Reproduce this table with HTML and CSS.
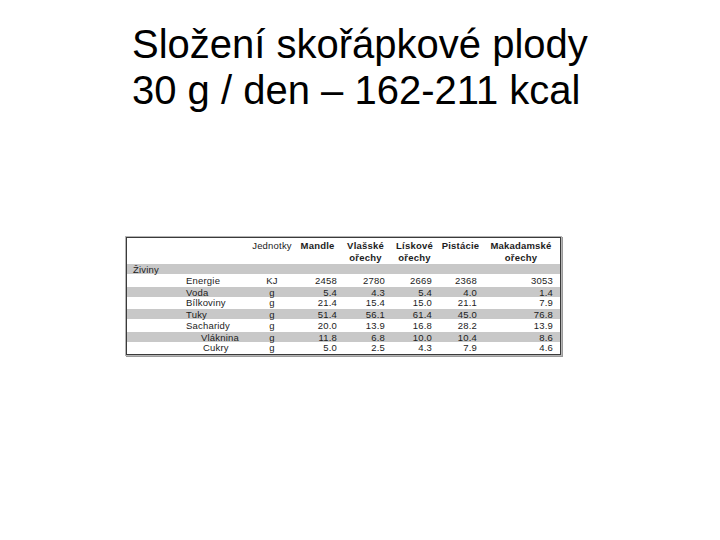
FILE: index.html
```html
<!DOCTYPE html>
<html lang="cs">
<head>
<meta charset="utf-8">
<title>Složení skořápkové plody</title>
<link rel="stylesheet" href="styles.css">
</head>
<body>
<header class="title">
  <h1 class="title-line">Složení skořápkové plody</h1>
  <h1 class="title-line">30 g / den – 162-211 kcal</h1>
</header>
<div class="tbl">
  <div class="row head">
    <div class="cell"></div>
    <div class="cell unit plain">Jednotky</div>
    <div class="cell hc">Mandle</div>
    <div class="cell hc">Vlašské<br>ořechy</div>
    <div class="cell hc">Lískové<br>ořechy</div>
    <div class="cell hc">Pistácie</div>
    <div class="cell hc">Makadamské<br>ořechy</div>
  </div>
  <div class="row gray h10">
    <div class="cell lab l0">Živiny</div>
  </div>
  <div class="row h13">
    <div class="cell lab l1">Energie</div><div class="cell unit">KJ</div>
    <div class="cell n c3">2458</div><div class="cell n c4">2780</div><div class="cell n c5">2669</div><div class="cell n c6">2368</div><div class="cell n c7">3053</div>
  </div>
  <div class="row gray h10">
    <div class="cell lab l1">Voda</div><div class="cell unit">g</div>
    <div class="cell n c3">5.4</div><div class="cell n c4">4.3</div><div class="cell n c5">5.4</div><div class="cell n c6">4.0</div><div class="cell n c7">1.4</div>
  </div>
  <div class="row h12">
    <div class="cell lab l1">Bílkoviny</div><div class="cell unit">g</div>
    <div class="cell n c3">21.4</div><div class="cell n c4">15.4</div><div class="cell n c5">15.0</div><div class="cell n c6">21.1</div><div class="cell n c7">7.9</div>
  </div>
  <div class="row gray h10">
    <div class="cell lab l1">Tuky</div><div class="cell unit">g</div>
    <div class="cell n c3">51.4</div><div class="cell n c4">56.1</div><div class="cell n c5">61.4</div><div class="cell n c6">45.0</div><div class="cell n c7">76.8</div>
  </div>
  <div class="row h13">
    <div class="cell lab l1">Sacharidy</div><div class="cell unit">g</div>
    <div class="cell n c3">20.0</div><div class="cell n c4">13.9</div><div class="cell n c5">16.8</div><div class="cell n c6">28.2</div><div class="cell n c7">13.9</div>
  </div>
  <div class="row gray h10">
    <div class="cell lab l2">Vláknina</div><div class="cell unit">g</div>
    <div class="cell n c3">11.8</div><div class="cell n c4">6.8</div><div class="cell n c5">10.0</div><div class="cell n c6">10.4</div><div class="cell n c7">8.6</div>
  </div>
  <div class="row h12">
    <div class="cell lab l3">Cukry</div><div class="cell unit">g</div>
    <div class="cell n c3">5.0</div><div class="cell n c4">2.5</div><div class="cell n c5">4.3</div><div class="cell n c6">7.9</div><div class="cell n c7">4.6</div>
  </div>
</div>
</body>
</html>
```
FILE: styles.css
```css
html, body {
  margin: 0;
  padding: 0;
  background: #ffffff;
}
body {
  width: 720px;
  height: 540px;
  font-family: "Liberation Sans", Arial, sans-serif;
  color: #000000;
}
.title {
  padding-top: 21px;
  padding-left: 132px;
  text-align: left;
}
.title-line {
  margin: 0;
  font-size: 40px;
  line-height: 46px;
  font-weight: normal;
  color: #000000;
}
.tbl {
  margin-top: 124px;
  margin-left: 126px;
  width: 433px;
  border: 1px solid #3a3a3a;
  box-shadow: 0 0 0 1px #b5b5b5, 1px 1px 0 1px #9a9a9a;
  font-size: 9.5px;
  letter-spacing: 0.2px;
  color: #1c1c1c;
}
.row {
  display: grid;
  grid-template-columns: 123px 44px 47px 49px 49px 43px 78px;
  align-items: center;
  background: #ffffff;
}
.row.gray {
  background: #c8c8c8;
}
.head {
  height: 26px;
  align-items: start;
  padding-top: 2px;
  box-sizing: border-box;
}
.h10 { height: 10px; }
.h12 { height: 12px; }
.h13 { height: 13px; }
.cell {
  line-height: 12px;
  white-space: nowrap;
}
.hc {
  font-weight: bold;
  text-align: center;
}
.unit {
  text-align: center;
}
.lab { text-align: left; }
.l0 { padding-left: 6px; }
.l1 { padding-left: 59px; }
.l2 { padding-left: 74px; }
.l3 { padding-left: 76px; }
.n { text-align: right; }
.c3 { padding-right: 4px; }
.c4 { padding-right: 5px; }
.c5 { padding-right: 7px; }
.c6 { padding-right: 5px; }
.c7 { padding-right: 7px; }
```
